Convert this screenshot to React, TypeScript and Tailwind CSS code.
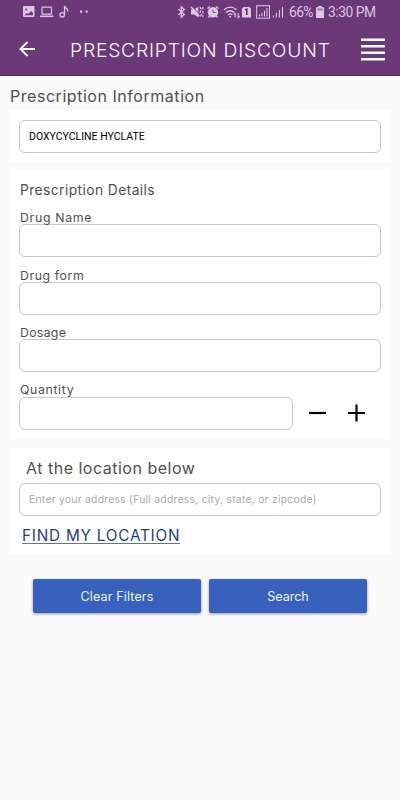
import type { ReactNode } from "react";

function StatusBar() {
  return (
    <div className="flex h-6 items-center text-[#dcc8e2]">
      <svg width="75" height="14" viewBox="0 0 75 14" className="ml-[20px]" fill="none" stroke="currentColor">
        {/* picture */}
        <rect x="3" y="1" width="11.5" height="11" rx="1" fill="currentColor" stroke="none" />
        <path d="M4.500 10.300 6.500 8l1.800 1L11 6l2 2v2.300z" fill="#6b3878" stroke="none" />
        <circle cx="6.2" cy="4.500" r="1" fill="#6b3878" stroke="none" />
        {/* laptop */}
        <rect x="22" y="2.2" width="9.5" height="7" rx="0.7" strokeWidth="1.2" />
        <path d="M20 11.3h13.5" strokeWidth="1.6" />
        {/* note */}
        <circle cx="42.2" cy="9.8" r="2.2" strokeWidth="1.3" />
        <path d="M44.5 9.8V.7c0 2.500 3.800 2 3.300 6" strokeWidth="1.3" />
        {/* more notifications */}
        <rect x="60" y="5.500" width="2.200" height="2.200" fill="currentColor" stroke="none" />
        <rect x="65.500" y="5.500" width="2.200" height="2.200" fill="currentColor" stroke="none" />
      </svg>
      <svg width="112" height="16" viewBox="0 0 112 16" className="ml-[80px]" fill="none" stroke="currentColor">
        {/* bluetooth */}
        <path d="m3.300 5 6 5.500L6.300 13.300V2.700l3 2.800-6 5.500" strokeWidth="1.300" />
        {/* muted speaker */}
        <path d="M16 5.500h3L23.300 2.800v10.400L19 10.500h-3z" fill="currentColor" stroke="none" />
        <path d="m17 2.500 7 7" stroke="#6b3878" strokeWidth="1" />
        <path d="m16 2.800 8.500 9.500" strokeWidth="1.300" />
        <path d="m25 3 1.300 2.500L25 8l1.300 2.500L25 13M27.800 3v10" strokeDasharray="2.600 1.400" strokeWidth="1.200" />
        {/* alarm */}
        <circle cx="38" cy="8.200" r="5.200" fill="currentColor" stroke="none" />
        <path d="m32.500 4.500 2.500-2M41 2.500l2.500 2M34.500 12l-1 1.500M41.500 12l1 1.500" strokeWidth="1.400" />
        <path d="M38 5.500v3h2.500" stroke="#6b3878" strokeWidth=".9" />
        {/* wifi */}
        <path d="M49 5.800c4-3.400 8.500-3.400 12.500 0M51 8.500c2.700-2.200 5.700-2.200 8.200 0M53 10.800c1.500-1.200 3-1.200 4.300 0" strokeWidth="1.400" />
        <circle cx="55.200" cy="12.800" r="1" fill="currentColor" stroke="none" />
        <path d="M60.200 9v4.500m-1.400-3L60.200 9m3 0v4.500l1.400-1.500" strokeWidth="1.100" />
        {/* sim */}
        <path d="M68.500 3h6l1.500 1.500V13.500h-9V4.500z" fill="currentColor" stroke="none" />
        <path d="m70.200 6 1.600-.8V11" stroke="#4d2259" strokeWidth="1.400" />
        {/* signal */}
        <rect x="81.700" y="1.700" width="12.800" height="12.500" strokeWidth="1" />
        <path d="M84.500 12.500v-2M87 12.500V8.800M89.500 12.500V6.500M92 12.500V4" strokeWidth="1.100" />
        <path d="M98.500 13.500v-2M101.500 13.500V8.800M104.500 13.500V6M107.500 13.500V3" strokeWidth="1.100" />
      </svg>
      <span className="ml-[2px] w-[27px] whitespace-nowrap font-['Roboto',sans-serif] text-[13.800px] tracking-[-0.600px]">66%</span>
      <svg width="8" height="12" viewBox="0 0 8 12" className="mr-[4px]">
        <path d="M2.200 0h3.600v1.300H8V12H0V1.300h2.200z" fill="currentColor" />
        <path d="M1.200 2.500h5.600v2H1.200z" fill="#9b75a5" />
      </svg>
      <span className="whitespace-nowrap font-['Roboto',sans-serif] text-[13.800px] tracking-[-0.450px]">3:30 PM</span>
    </div>
  );
}

function Header() {
  return (
    <div className="flex h-[51px] items-center">
      <svg width="16" height="16" viewBox="0 0 16 16" className="-mt-[2px] ml-[19px]" fill="none" stroke="#fff" strokeWidth="1.900">
        <path d="M16 8H2M8.500 1 1.500 8l7 7" />
      </svg>
      <h1 className="mt-[2px] ml-[35px] w-[261px] whitespace-nowrap text-[19.300px] font-light tracking-[0.780px] text-[#fff5ff]">
        PRESCRIPTION DISCOUNT
      </h1>
      <svg width="24" height="23" viewBox="0 0 24 23" className="ml-[30px]" stroke="#fff" strokeWidth="2.600">
        <path d="M0 1.700h24M0 8.200h24M0 14.700h24M0 21.200h24" />
      </svg>
    </div>
  );
}

function Box({ children, className = "" }: { children?: ReactNode; className?: string }) {
  return (
    <div className={`flex h-[33px] items-center rounded-[6px] border border-[#c8c8c8] bg-white px-[9px] ${className}`}>
      {children}
    </div>
  );
}

const fields = [
  { label: "Drug Name", style: "tracking-[0.700px]" },
  { label: "Drug form", style: "tracking-[0.600px]" },
  { label: "Dosage", style: "tracking-[0.300px]" },
];

export default function App() {
  return (
    <div className="h-[800px] w-[400px] overflow-hidden bg-[#fafafa] font-['Inter',sans-serif] text-[#505050]">
      <div className="h-[76px] border-b border-[#54295f] bg-[#6b3878]">
        <StatusBar />
        <Header />
      </div>

      <h2 className="flex h-[34px] items-center pt-[6px] pl-[10px] text-base tracking-[0.540px] whitespace-nowrap">
        Prescription Information
      </h2>

      <div className="mx-[10px] h-[52px] bg-white px-[9px] pt-[10px]">
        <Box>
          <span className="font-['Roboto',sans-serif] text-[10.500px] text-black">DOXYCYCLINE HYCLATE</span>
        </Box>
      </div>

      {/* Prescription details */}
      <div className="mx-[10px] mt-[9px] h-[268px] bg-white px-[9px] pt-[9px]">
        <h3 className="h-[29px] pl-px text-[13.800px] leading-[21px] tracking-[0.420px]">Prescription Details</h3>
        {fields.map((field) => (
          <div key={field.label} className="mb-[9.700px]">
            <p className={`h-[15px] pl-px text-[12.300px] leading-[17px] ${field.style}`}>{field.label}</p>
            <Box />
          </div>
        ))}
        <p className="h-[15px] pl-px text-[12.300px] leading-[16px] tracking-[0.650px]">Quantity</p>
        <div className="flex items-center">
          <Box className="w-[274px]" />
          <svg width="18" height="18" viewBox="0 0 18 18" className="-mt-[2px] ml-[16px]" stroke="#000" strokeWidth="2.200">
            <path d="M0 9h17" />
          </svg>
          <svg width="18" height="18" viewBox="0 0 18 18" className="-mt-[2px] ml-[21px]" stroke="#000" strokeWidth="2.200">
            <path d="M0 9h17M8.500 .5v17" />
          </svg>
        </div>
      </div>

      {/* Location */}
      <div className="mx-[10px] mt-[9px] h-[106px] bg-white px-[9px] pt-[10px]">
        <h3 className="h-[25px] pl-[7px] text-base leading-[21px] tracking-[0.500px]">At the location below</h3>
        <Box>
          <span className="text-[10.300px] tracking-[0.280px] whitespace-nowrap text-[#a8a8a8]">
            Enter your address (Full address, city, state, or zipcode)
          </span>
        </Box>
        <div className="mt-[11px] pl-[3px]">
          <a className="block h-[17px] w-[158px] border-b border-[#5276a5] text-[15.300px] leading-[17px] tracking-[0.780px] whitespace-nowrap text-[#1b3f7d]">
            FIND MY LOCATION
          </a>
        </div>
      </div>

      <div className="mt-[25px] flex gap-2 px-[33px] text-[12.500px] text-[#edf5ff]">
        <button className="h-[34px] flex-1 rounded-[2px] bg-[#3861be] pt-[2px] tracking-[0.150px] shadow-[0_1px_3px_rgba(0,0,0,0.4)]">
          Clear Filters
        </button>
        <button className="h-[34px] w-[158px] rounded-[2px] bg-[#3861be] pt-[2px] shadow-[0_1px_3px_rgba(0,0,0,0.4)]">
          Search
        </button>
      </div>
    </div>
  );
}
